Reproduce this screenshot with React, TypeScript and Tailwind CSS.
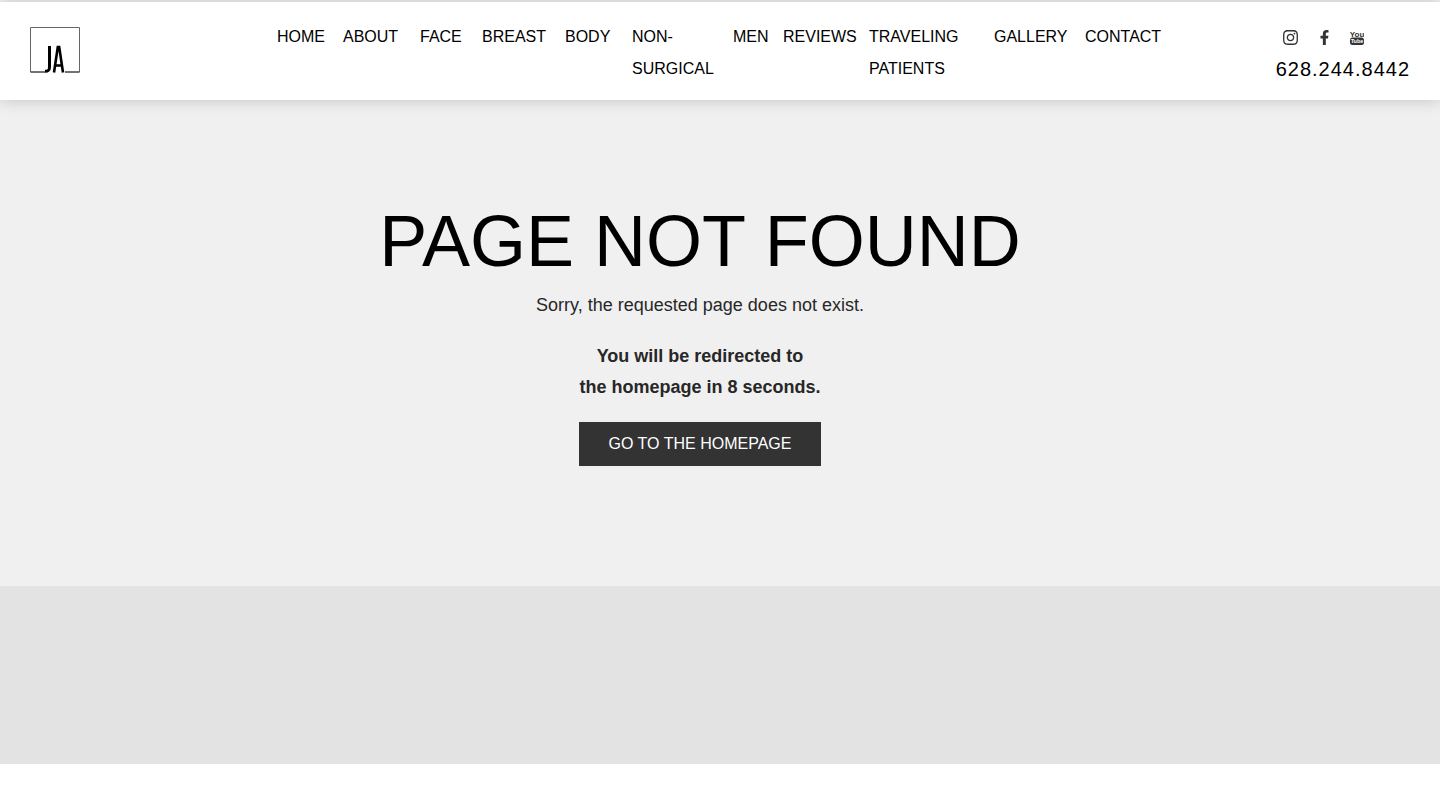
import { FaFacebookF, FaInstagram } from "react-icons/fa";

const links = [
  "HOME",
  "ABOUT",
  "FACE",
  "BREAST",
  "BODY",
  "NON-SURGICAL",
  "MEN",
  "REVIEWS",
  "TRAVELING PATIENTS",
  "GALLERY",
  "CONTACT",
];

function Logo() {
  return (
    <svg width="50" height="46" viewBox="0 0 50 46" fill="none" aria-hidden="true">
      <path d="M15 45H0.5V0.5H49.5V45H35" stroke="#666" />
      <path d="M0.5 45H15M35 45H49.5" stroke="#333" />
      <path d="M19.5 19V40C19.5 43 18.5 44.3 15 44.3" stroke="#000" strokeWidth="3" />
      <path d="M24 45.500L27.800 20H29.200L33 45.500M25.500 38.500H31.500" stroke="#000" strokeWidth="2.600" />
    </svg>
  );
}

function YouTubeMark() {
  return (
    <svg width="14" height="15" viewBox="0 0 14 15" aria-hidden="true">
      <text
        x="7"
        y="6.500"
        textAnchor="middle"
        fontFamily="'Liberation Sans', Arial, sans-serif"
        fontWeight="700"
        fontSize="8"
        fill="#333"
      >
        You
      </text>
      <rect x="0" y="7.500" width="14" height="7.500" rx="2.500" fill="#333" />
      <text
        x="7"
        y="13.300"
        textAnchor="middle"
        fontFamily="'Liberation Sans', Arial, sans-serif"
        fontWeight="700"
        fontSize="5.500"
        fill="#fff"
      >
        Tube
      </text>
    </svg>
  );
}

function Header() {
  return (
    <header className="relative grid grid-cols-[247fr_886fr_247fr] items-start bg-white px-[30px] pt-[19px] pb-[15px] text-black shadow-[0_0_15px_rgba(0,0,0,0.2)]">
      <a href="#home" aria-label="JA home" className="mt-1.5 justify-self-start">
        <Logo />
      </a>
      <nav aria-label="Main">
        <ul className="grid grid-cols-[66fr_77fr_62fr_83fr_67fr_101fr_50fr_86fr_125fr_91fr_78fr] text-base leading-8">
          {links.map((label) => (
            <li key={label} className="min-w-0">
              <a href="#menu" className="block">
                {label}
              </a>
            </li>
          ))}
        </ul>
      </nav>
      <div className="justify-self-end">
        <div className="flex h-8 items-center gap-[18px] pl-1.5">
          <a href="#instagram" aria-label="Instagram">
            <FaInstagram size={17} color="#333" />
          </a>
          <a href="#facebook" aria-label="Facebook">
            <FaFacebookF size={15} color="#333" />
          </a>
          <a href="#youtube" aria-label="YouTube">
            <YouTubeMark />
          </a>
        </div>
        <a href="tel:6282448442" className="block text-xl leading-8 tracking-wider">
          628.244.8442
        </a>
      </div>
    </header>
  );
}

export default function App() {
  return (
    <div className="bg-[#f0f0f0] pt-0.5 font-['Liberation_Sans',Arial,sans-serif]">
      <Header />
      <main className="flex flex-col items-center pt-24 pr-10 pb-[120px] text-center text-lg text-[#272727]">
        <h1 className="text-7xl leading-[90px] text-black">PAGE NOT FOUND</h1>
        <p className="mt-1 leading-[31px]">Sorry, the requested page does not exist.</p>
        <p className="mt-5 leading-[31px] font-bold">
          You will be redirected to
          <br />
          the homepage in 8 seconds.
        </p>
        <a href="#home" className="mt-[19px] bg-[#333] px-[30px] py-2.5 text-base leading-6 text-white">
          GO TO THE HOMEPAGE
        </a>
      </main>
      <div className="h-[178px] bg-[#e3e3e3]" />
      <footer className="h-[46px] bg-white" />
    </div>
  );
}
